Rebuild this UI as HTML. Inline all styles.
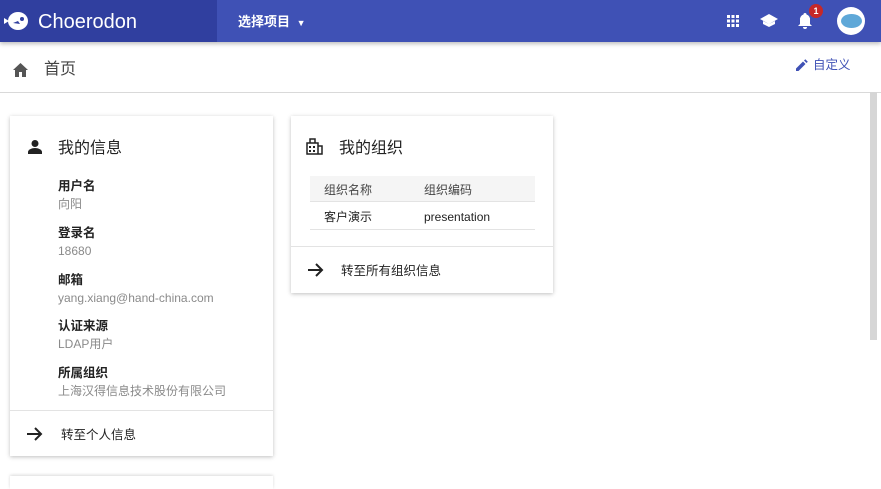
<!DOCTYPE html>
<html style="overflow:hidden;width:881px;height:489px"><head><meta charset="utf-8"><style>
*{margin:0;padding:0;box-sizing:border-box}
body{width:881px;height:489px;overflow:hidden;background:#fff;font-family:"Liberation Sans","Noto Sans CJK SC",sans-serif;position:relative;line-height:1.2}
.hd{position:absolute;left:0;top:0;width:881px;height:42px;background:#3f51b5;box-shadow:0 2px 4px rgba(0,0,0,.25)}
.hl{position:absolute;left:0;top:0;width:217px;height:42px;background:#303f9f}
.logo{position:absolute;left:38px;top:10px;color:#fff;font-size:20px}
.proj{position:absolute;left:238px;top:14px;color:#fff;font-size:13px;font-weight:bold}
.sub{position:absolute;top:42px;left:0;width:881px;height:51px;border-bottom:1px solid #d9d9d9}
.card{position:absolute;background:#fff;box-shadow:0 1px 4px rgba(0,0,0,.25)}
.t{position:absolute;font-size:16px;color:#222}
.lb{position:absolute;left:48px;font-size:12.5px;color:#222;font-weight:bold}
.vl{position:absolute;left:48px;font-size:12px;color:#8a8a8a}
.ft{position:absolute;font-size:12.5px;color:#222}
.sb{position:absolute;left:870px;top:92px;width:7px;height:248px;background:#d6d6d6}
</style></head><body>
<div class="hd"><div class="hl"></div>
<svg style="position:absolute;left:4px;top:10px" width="26" height="22" viewBox="0 0 26 22"><ellipse cx="14" cy="11" rx="10" ry="9" fill="#fff"/><path d="M0 8l5 3-5 3z" fill="#fff"/><circle cx="18" cy="9" r="2" fill="#303f9f"/><path d="M9 13l5-2 2 3z" fill="#303f9f"/></svg>
<div class="logo">Choerodon</div>
<div class="proj">选择项目 <span style="font-size:9px;margin-left:3px">▼</span></div>
<svg style="position:absolute;left:727px;top:15px" width="12" height="12"><g fill="#fff"><rect x="0" y="0" width="3" height="3"/><rect x="4.5" y="0" width="3" height="3"/><rect x="9" y="0" width="3" height="3"/><rect x="0" y="4.5" width="3" height="3"/><rect x="4.5" y="4.5" width="3" height="3"/><rect x="9" y="4.5" width="3" height="3"/><rect x="0" y="9" width="3" height="3"/><rect x="4.5" y="9" width="3" height="3"/><rect x="9" y="9" width="3" height="3"/></g></svg>
<svg style="position:absolute;left:760px;top:14px" width="18" height="14" viewBox="0 0 18 14"><path d="M9 0L0 5l9 5 9-5z M3 7v3l6 3 6-3V7l-6 3z" fill="#fff"/></svg>
<svg style="position:absolute;left:798px;top:13px" width="14" height="16" viewBox="0 0 14 16"><path d="M7 0a1.5 1.5 0 0 1 1.5 1.5A5 5 0 0 1 12 7v4l2 2H0l2-2V7a5 5 0 0 1 3.5-5.5A1.5 1.5 0 0 1 7 0zM5 14h4a2 2 0 0 1-4 0z" fill="#fff"/></svg>
<div style="position:absolute;left:809px;top:4px;width:14px;height:14px;border-radius:50%;background:#c62828;color:#fff;font-size:9px;font-weight:bold;text-align:center;line-height:14px">1</div>
<div style="position:absolute;left:837px;top:7px;width:28px;height:28px;border-radius:50%;background:#fff"><div style="position:absolute;left:4px;top:7px;width:21px;height:14px;border-radius:50%;background:#5fa8d8"></div></div>
</div>
<div class="sub">
<svg style="position:absolute;left:13px;top:21px" width="15" height="14" viewBox="0 0 15 14"><path d="M7.5 0L0 7h2v7h4V9h3v5h4V7h2z" fill="#555"/></svg>
<div style="position:absolute;left:44px;top:18px;font-size:16px;color:#444">首页</div>
<svg style="position:absolute;left:796px;top:17px" width="12" height="12" viewBox="0 0 12 12"><path d="M0 9.5V12h2.5l7-7L7 2.5zM11.8 2.7L9.3.2 8 1.5 10.5 4z" fill="#3f51b5"/></svg>
<div style="position:absolute;left:813px;top:16px;font-size:12.5px;color:#3f51b5">自定义</div>
</div>
<div class="sb"></div>
<div class="card" style="left:10px;top:116px;width:263px;height:340px">
<svg style="position:absolute;left:18px;top:24px" width="14" height="14" viewBox="0 0 14 14"><circle cx="7" cy="3.5" r="3.5" fill="#222"/><path d="M0 14v-2c0-2.5 4-4 7-4s7 1.5 7 4v2z" fill="#222"/></svg>
<div class="t" style="left:48px;top:23px">我的信息</div>
<div class="lb" style="top:63px">用户名</div><div class="vl" style="top:81px">向阳</div>
<div class="lb" style="top:110px">登录名</div><div class="vl" style="top:128px">18680</div>
<div class="lb" style="top:157px">邮箱</div><div class="vl" style="top:175px">yang.xiang@hand-china.com</div>
<div class="lb" style="top:203px">认证来源</div><div class="vl" style="top:221px">LDAP用户</div>
<div class="lb" style="top:250px">所属组织</div><div class="vl" style="top:268px">上海汉得信息技术股份有限公司</div>
<div style="position:absolute;left:0;top:294px;width:263px;border-top:1px solid #e3e3e3"></div>
<svg style="position:absolute;left:17px;top:311px" width="16" height="14" viewBox="0 0 16 14"><path d="M0 7h14M8 1l6 6-6 6" fill="none" stroke="#222" stroke-width="2"/></svg>
<div class="ft" style="left:51px;top:312px">转至个人信息</div>
</div>
<div class="card" style="left:291px;top:116px;width:262px;height:177px">
<svg style="position:absolute;left:15px;top:22px" width="18" height="17" viewBox="0 0 18 17"><path d="M1 5h11v11H1z M12 8h4v8h-4 M4 5V1h5v4" fill="none" stroke="#222" stroke-width="1.5"/><path d="M3 8h2v2H3zM7 8h2v2H7zM3 12h2v2H3zM7 12h2v2H7z" fill="#222"/></svg>
<div class="t" style="left:48px;top:23px">我的组织</div>
<div style="position:absolute;left:19px;top:60px;width:225px;height:26px;background:#f5f5f5;border-bottom:1px solid #e3e3e3"></div>
<div style="position:absolute;left:33px;top:67px;font-size:12px;color:#444">组织名称</div>
<div style="position:absolute;left:133px;top:67px;font-size:12px;color:#444">组织编码</div>
<div style="position:absolute;left:33px;top:94px;font-size:12px;color:#222">客户演示</div>
<div style="position:absolute;left:133px;top:94px;font-size:12px;color:#222">presentation</div>
<div style="position:absolute;left:19px;top:113px;width:225px;border-top:1px solid #e3e3e3"></div>
<div style="position:absolute;left:0;top:130px;width:262px;border-top:1px solid #e3e3e3"></div>
<svg style="position:absolute;left:17px;top:147px" width="16" height="14" viewBox="0 0 16 14"><path d="M0 7h14M8 1l6 6-6 6" fill="none" stroke="#222" stroke-width="2"/></svg>
<div class="ft" style="left:50px;top:148px">转至所有组织信息</div>
</div>
<div class="card" style="left:10px;top:476px;width:263px;height:13px;box-shadow:0 -1px 3px rgba(0,0,0,.15)"></div>
</body></html>
